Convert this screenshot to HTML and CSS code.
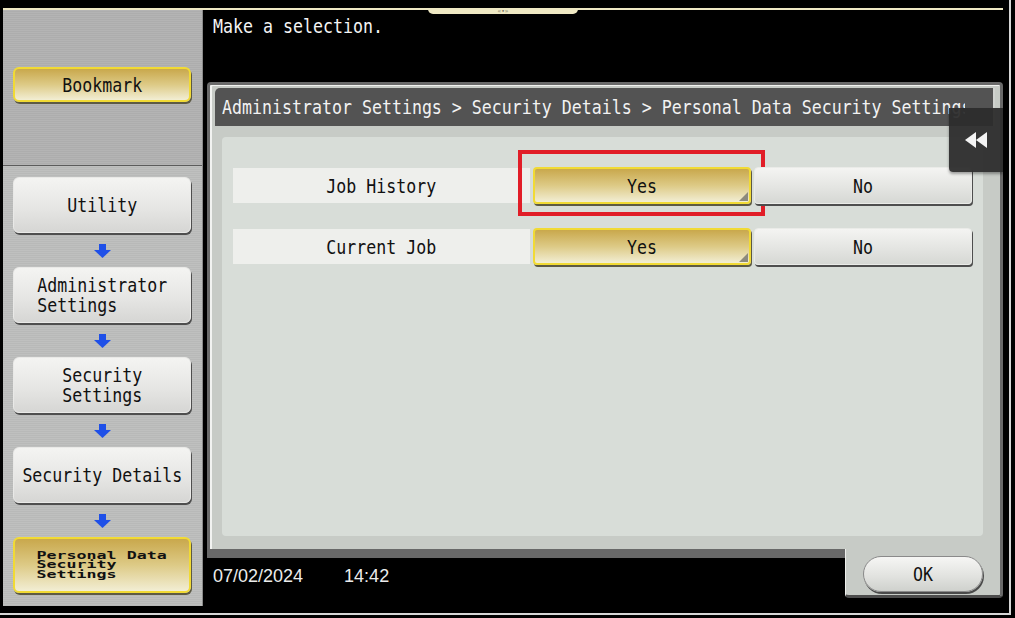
FILE: index.html
```html
<!DOCTYPE html>
<html lang="en">
<head>
  <meta charset="UTF-8">
  <meta name="viewport" content="width=device-width, initial-scale=1.0">
  <title>Personal Data Security Settings</title>
  <link rel="stylesheet" href="styles.css">
</head>
<body>
<div class="bezel">
  <div class="device">
    <div class="handle">&laquo;&bull;&raquo;</div>

    <aside class="sidebar">
      <div class="sb-top">
        <div class="key gold bookmark"><span class="t">Bookmark</span></div>
      </div>
      <div class="sb-path">
        <div class="key grey"><span class="t">Utility</span></div>
        <div class="arrow"><svg width="17" height="14" viewBox="0 0 17 14"><path d="M5 0h7v6h5l-8.5 8L0 6h5z" fill="#1f50e8"/></svg></div>
        <div class="key grey"><span class="t lines">Administrator<br>Settings</span></div>
        <div class="arrow"><svg width="17" height="14" viewBox="0 0 17 14"><path d="M5 0h7v6h5l-8.5 8L0 6h5z" fill="#1f50e8"/></svg></div>
        <div class="key grey"><span class="t lines">Security<br>Settings</span></div>
        <div class="arrow"><svg width="17" height="14" viewBox="0 0 17 14"><path d="M5 0h7v6h5l-8.5 8L0 6h5z" fill="#1f50e8"/></svg></div>
        <div class="key grey"><span class="t">Security Details</span></div>
        <div class="arrow"><svg width="17" height="14" viewBox="0 0 17 14"><path d="M5 0h7v6h5l-8.5 8L0 6h5z" fill="#1f50e8"/></svg></div>
        <div class="key gold"><span class="small">Personal Data<br>Security<br>Settings</span></div>
      </div>
    </aside>

    <main class="main">
      <div class="msg"><span class="t left">Make a selection.</span></div>

      <div class="panel">
        <div class="crumb">
          <div class="crumb-text"><span class="t left">Administrator Settings &gt; Security Details &gt; Personal Data Security Settings</span></div>
        </div>

        <div class="content">
          <div class="row">
            <div class="label"><span class="t">Job History</span></div>
            <div class="opt yes hl"><span class="t">Yes</span></div>
            <div class="opt no"><span class="t">No</span></div>
          </div>
          <div class="row">
            <div class="label"><span class="t">Current Job</span></div>
            <div class="opt yes"><span class="t">Yes</span></div>
            <div class="opt no"><span class="t">No</span></div>
          </div>
        </div>

        <div class="back">
          <svg width="22" height="16" viewBox="0 0 22 16"><path d="M11 0L0 8l11 8zM22 0L11 8l11 8z" fill="#f4f4f4"/></svg>
        </div>
      </div>

      <div class="footer">
        <div class="clock"><span>07/02/2024</span><span>14:42</span></div>
        <div class="ok-tab"><div class="ok"><span class="t">OK</span></div></div>
      </div>
    </main>
  </div>
</div>
</body>
</html>
```

FILE: styles.css
```css
* { box-sizing: border-box; }
body {
  margin: 0;
  width: 1015px;
  height: 618px;
  overflow: hidden;
  background: #000;
  font-family: "DejaVu Sans Mono", monospace;
}
.bezel {
  width: 1011px;
  height: 615px;
  padding: 8px 0 0 3px;
  border-right: 2px solid #d6d6d6;
  border-bottom: 2px solid #d6d6d6;
}
.device {
  position: relative;
  width: 1000px;
  height: 598px;
  display: flex;
  border-top: 2px solid #efe9c4;
}
.handle {
  position: absolute;
  left: 425px;
  top: -2px;
  width: 150px;
  height: 6px;
  background: #efe9c4;
  border-radius: 0 0 5px 5px;
  color: #6a6a5a;
  font-size: 6px;
  line-height: 6px;
  text-align: center;
}

/* condensed device font */
.t {
  display: inline-block;
  white-space: nowrap;
  transform: scaleX(.83);
}
.t.left { transform-origin: left center; }
.t.lines { text-align: left; }
.small {
  display: inline-block;
  font-size: 16px;
  font-weight: bold;
  line-height: 14px;
  text-align: left;
  white-space: nowrap;
  transform: scale(1.04, .7);
}

/* left column */
.sidebar {
  width: 200px;
  display: flex;
  flex-direction: column;
  border-right: 1px solid #8a8a8a;
}
.sb-top {
  height: 156px;
  padding: 57px 0 0 10px;
  border-bottom: 1px solid #5c5c5c;
  background: repeating-linear-gradient(#b4b4b4 0 1px, #adadad 1px 2px);
}
.sb-path {
  flex: 1;
  padding: 11px 0 0 10px;
  display: flex;
  flex-direction: column;
  background: repeating-linear-gradient(#bfc0bf 0 1px, #b8b9b8 1px 2px);
}
.key {
  width: 178px;
  height: 56px;
  display: flex;
  align-items: center;
  justify-content: center;
  color: #111;
  font-size: 20px;
  line-height: 20px;
  border-radius: 6px;
}
.key.grey {
  background: linear-gradient(#f4f4f2, #e6e6e4 55%, #d6d6d4);
  border: 1px solid #e9e9e7;
  box-shadow: 1px 2px 0 #4e4e4e;
}
.gold, .opt.yes {
  background: linear-gradient(#c9a84c, #ddca86 50%, #f2eed4);
  border: 2px solid #f1da34;
  box-shadow: 1px 2px 0 #5d5a44;
}
.key.bookmark { height: 35px; }
.arrow {
  width: 178px;
  height: 34px;
  display: flex;
  align-items: center;
  justify-content: center;
  padding-top: 2px;
}

/* main area */
.main {
  width: 796px;
  margin-left: 4px;
  display: flex;
  flex-direction: column;
}
.msg {
  height: 72px;
  padding: 4px 0 0 6px;
  color: #f4f4f4;
  font-size: 20px;
  line-height: 24px;
}
.panel {
  position: relative;
  height: 467px;
  padding: 3px 5px 13px;
  display: flex;
  flex-direction: column;
  background: #c7cbc6;
  border: 3px solid #6a6a6a;
  border-bottom: 0;
  border-radius: 4px 4px 0 0;
  box-shadow: inset 2px 1px 0 #f2f3f1;
}
.crumb {
  height: 38px;
  padding: 0 28px 0 7px;
  display: flex;
  align-items: center;
  background: #535353;
  border-radius: 5px 0 0 0;
  border-right: 2px solid #d0d2cf;
  color: #f2f2f2;
  font-size: 20px;
}
.crumb-text {
  width: 100%;
  overflow: hidden;
  white-space: nowrap;
}
.content {
  flex: 1;
  margin: 11px 12px 0 7px;
  padding: 30px 11px;
  display: flex;
  flex-direction: column;
  gap: 24px;
  background: #d8ddd8;
  border-radius: 4px;
}
.row {
  height: 37px;
  display: flex;
  gap: 3px;
  font-size: 20px;
  color: #111;
}
.label {
  width: 297px;
  margin: 1px 0;
  display: flex;
  align-items: center;
  justify-content: center;
  background: #eeefec;
}
.opt {
  position: relative;
  width: 218px;
  display: flex;
  align-items: center;
  justify-content: center;
  border-radius: 4px;
}
.opt.no {
  background: linear-gradient(#f4f4f2, #e4e5e2 55%, #d6d8d4);
  border: 1px solid #eaebe8;
  box-shadow: 1px 2px 0 #4e4e4e;
}
.opt.yes::after {
  content: "";
  position: absolute;
  right: 1px;
  bottom: 1px;
  border-left: 9px solid transparent;
  border-bottom: 9px solid #8d8a7c;
}
.opt.hl::before {
  content: "";
  position: absolute;
  top: -19px;
  right: -16px;
  bottom: -14px;
  left: -17px;
  border: 4px solid #e11d27;
}
.back {
  position: absolute;
  top: 23px;
  right: -3px;
  width: 54px;
  height: 64px;
  display: flex;
  align-items: center;
  justify-content: center;
  background: rgba(44, 44, 44, .94);
  border-radius: 0 0 0 4px;
  box-shadow: 0 2px 3px rgba(0, 0, 0, .35);
}

/* bottom strip */
.footer {
  flex: 1;
  display: flex;
  align-items: flex-start;
}
.clock {
  flex: 1;
  align-self: stretch;
  padding: 7px 0 0 6px;
  display: flex;
  gap: 41px;
  border-top: 9px solid #686868;
  color: #ececec;
  font-family: "Liberation Sans", Arial, sans-serif;
  font-size: 18px;
  line-height: 22px;
}
.ok-tab {
  width: 158px;
  height: 49px;
  padding: 7px 0 0 17px;
  background: #c7cbc6;
  border-left: 1px solid #eeefec;
  border-right: 3px solid #6a6a6a;
  border-bottom: 3px solid #4c4c4c;
  border-radius: 0 0 4px 4px;
}
.ok {
  width: 120px;
  height: 36px;
  display: flex;
  align-items: center;
  justify-content: center;
  background: linear-gradient(#f6f6f4, #e2e3e0 55%, #cfd1cd);
  border: 1px solid #8a8a8a;
  border-radius: 18px;
  box-shadow: 1px 2px 0 #4a4a4a;
  color: #111;
  font-size: 20px;
}
```
